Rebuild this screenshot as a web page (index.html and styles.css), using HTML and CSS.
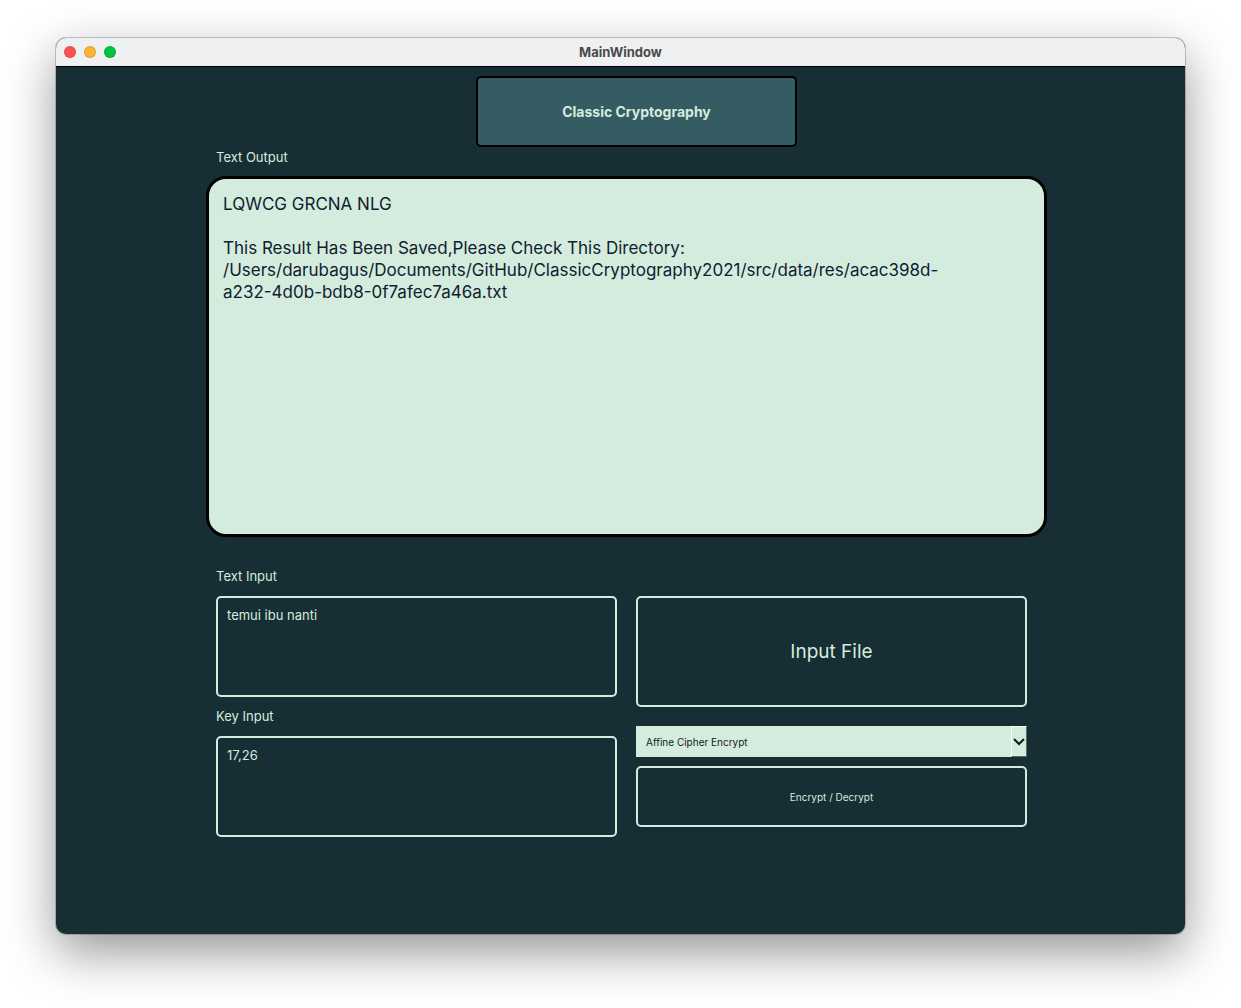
FILE: index.html
```html
<!DOCTYPE html>
<html lang="en">
<head>
<meta charset="utf-8">
<meta name="viewport" content="width=device-width, initial-scale=1">
<title>MainWindow</title>
<link rel="stylesheet" href="styles.css">
</head>
<body>
<div class="window">
  <header class="titlebar">
    <div class="lights">
      <button class="light light-close" type="button" aria-label="Close"></button>
      <button class="light light-minimize" type="button" aria-label="Minimize"></button>
      <button class="light light-zoom" type="button" aria-label="Zoom"></button>
    </div>
    <h1 class="window-title">MainWindow</h1>
  </header>
  <main class="content">
    <div class="banner-row">
      <button class="banner" type="button">Classic Cryptography</button>
    </div>
    <label class="label output-label" for="output">Text Output</label>
    <textarea class="output" id="output" readonly spellcheck="false">LQWCG GRCNA NLG

This Result Has Been Saved,Please Check This Directory:
/Users/darubagus/Documents/GitHub/ClassicCryptography2021/src/data/res/acac398d-
a232-4d0b-bdb8-0f7afec7a46a.txt</textarea>
    <form class="form">
      <div class="fields">
        <label class="label" for="text-input">Text Input</label>
        <textarea class="field" id="text-input" spellcheck="false">temui ibu nanti</textarea>
        <label class="label" for="key-input">Key Input</label>
        <textarea class="field" id="key-input" spellcheck="false">17,26</textarea>
      </div>
      <div class="actions">
        <button class="outline file-button" type="button">Input File</button>
        <div class="picker">
          <select class="cipher" aria-label="Cipher">
            <option>Affine Cipher Encrypt</option>
          </select>
          <span class="drop-arrow">
            <svg class="chevron" width="12" height="8" viewBox="0 0 12 8" fill="none" stroke="#14191a" stroke-width="2" aria-hidden="true"><path d="M1 1l5 5 5-5"/></svg>
          </span>
        </div>
        <button class="outline run-button" type="button">Encrypt / Decrypt</button>
      </div>
    </form>
  </main>
</div>
</body>
</html>
```

FILE: styles.css
```css
* {
  box-sizing: border-box;
}

body {
  margin: 0;
  min-height: 100vh;
  padding: 38px 56px 74px;
  display: flex;
  background: #fff;
  font-family: Inter, "Liberation Sans", sans-serif;
}

button,
select,
textarea {
  margin: 0;
  font-family: inherit;
}

.window {
  flex: 1;
  display: flex;
  flex-direction: column;
  border-radius: 10px;
  overflow: hidden;
  background: #172e35;
  box-shadow: 0 0 0 1px rgba(0, 0, 0, 0.2), 0 18px 50px rgba(0, 0, 0, 0.42);
}

.titlebar {
  display: grid;
  grid-template-columns: 1fr auto 1fr;
  align-items: center;
  height: 29px;
  padding: 0 8px;
  background: #eff0f2;
  border-bottom: 1px solid #000;
}

.lights {
  display: flex;
  gap: 8px;
}

.light {
  width: 12px;
  height: 12px;
  padding: 0;
  border: 1px solid rgba(0, 0, 0, 0.12);
  border-radius: 50%;
}

.light-close {
  background: #ff5051;
}

.light-minimize {
  background: #ffb237;
}

.light-zoom {
  background: #00c33f;
}

.window-title {
  margin: 0;
  font-size: 13px;
  line-height: 16px;
  font-weight: 700;
  color: #4a4a4b;
}

.content {
  display: flex;
  flex-direction: column;
  padding: 9px 138px 20px 150px;
}

.banner-row {
  display: flex;
  justify-content: center;
  padding-left: 20px;
}

.banner {
  width: 321px;
  height: 71px;
  border: 2px solid #000;
  border-radius: 5px;
  background: #355b63;
  color: #d4ecdd;
  font-size: 14px;
  font-weight: 700;
}

.label {
  font-size: 13px;
  line-height: 20px;
  color: #d4ecdd;
}

.output-label {
  padding-left: 10px;
}

.output {
  height: 361px;
  margin-top: 9px;
  padding: 14px;
  border: 3px solid #000;
  border-radius: 20px;
  background: #d4ecdd;
  color: #112031;
  font-size: 17px;
  line-height: 22px;
  resize: none;
  outline: none;
}

.form {
  display: grid;
  grid-template-columns: 401fr 391fr;
  gap: 19px;
  margin-top: 29px;
  padding: 0 20px 0 10px;
}

.fields,
.actions {
  display: flex;
  flex-direction: column;
}

.actions {
  padding-top: 30px;
}

.field {
  height: 101px;
  margin: 10px 0 9px;
  padding: 8px 9px;
  border: 2px solid #d4ecdd;
  border-radius: 5px;
  background: transparent;
  color: #d4ecdd;
  font-size: 13px;
  line-height: 18px;
  resize: none;
  outline: none;
}

.outline {
  border: 2px solid #d4ecdd;
  border-radius: 5px;
  background: transparent;
  color: #d4ecdd;
}

.file-button {
  height: 111px;
  font-size: 19px;
}

.picker {
  position: relative;
  margin: 19px 0 9px;
}

.cipher {
  display: block;
  width: 100%;
  height: 31px;
  padding: 0 20px 0 10px;
  border: 0;
  border-radius: 0;
  appearance: none;
  background: #d4ecdd;
  color: #14191a;
  font-size: 10px;
}

.drop-arrow {
  position: absolute;
  top: 0;
  right: 0;
  bottom: 0;
  width: 16px;
  display: flex;
  align-items: center;
  justify-content: center;
  border: 1px solid;
  border-color: #f4fff8 #5a6b60 #5a6b60 #f4fff8;
  pointer-events: none;
}

.chevron {
  flex: none;
}

.run-button {
  height: 61px;
  font-size: 10px;
}
```
